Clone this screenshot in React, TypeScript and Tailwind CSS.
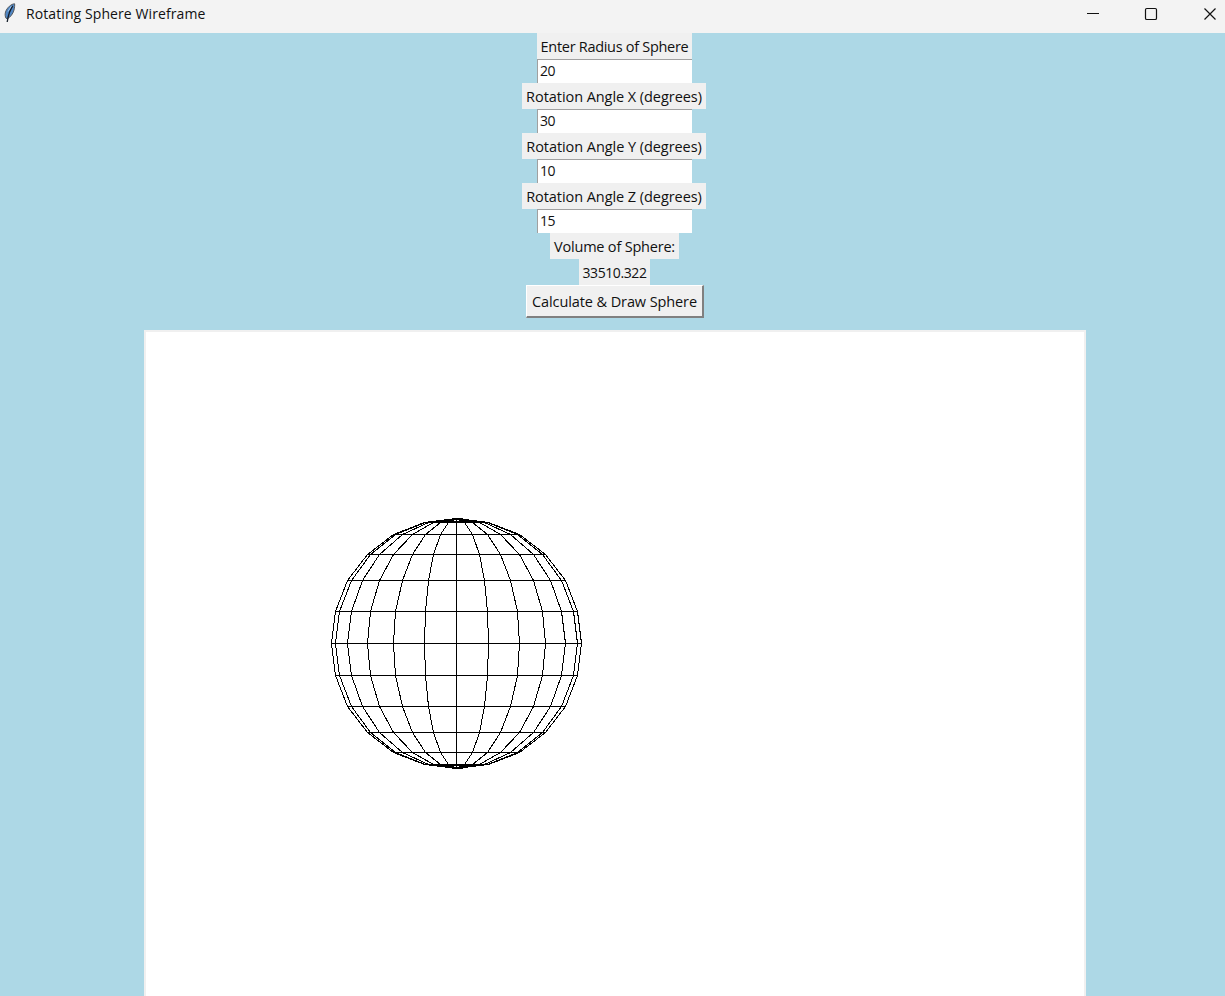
import React from "react";

const RADIUS = 125.4;
const CX = 310.5;
const CY = 311.5;
const STEP = Math.PI / 12;

function point(lat: number, lon: number): string {
  const x = CX + Math.round(RADIUS * Math.cos(lat * STEP) * Math.sin(lon * STEP));
  const y = CY - Math.round(RADIUS * Math.sin(lat * STEP));
  return `${x},${y}`;
}

function Sphere() {
  const lats = Array.from({ length: 13 }, (_, i) => i - 6);
  return (
    <svg width="938" height="800" className="block" fill="none" stroke="#000" strokeWidth="1" shapeRendering="crispEdges">
      {lats.map((lon) => (
        <polyline key={`m${lon}`} points={lats.map((lat) => point(lat, lon)).join(" ")} />
      ))}
      {lats.map((lat) => (
        <polyline key={`p${lat}`} points={`${point(lat, -6)} ${point(lat, 6)}`} />
      ))}
      <path d={`M${CX - 5} ${CY - 125}h11M${CX - 5} ${CY + 125}h11M${CX - 26} ${CY - 122}h52M${CX - 26} ${CY + 122}h52`} />
    </svg>
  );
}

function Feather() {
  return (
    <svg width="12" height="20" viewBox="0 0 12 20" className="ml-1 block">
      <path d="M10.6.8C7.500.8 3 4.500 1.500 9c-.7 2.700-.3 4.700.5 6.200l1.300.6C6 14.500 9 11 10 7c.6-2.500.8-4.800.6-6.200Z" fill="#4f86c4" stroke="#55585c" strokeWidth="1" />
      <path d="M8.800 3C6.500 6 4.500 10 3.200 19" fill="none" stroke="#17202c" strokeWidth="1.300" />
      <path d="M7.300 3.200 4 8.500" stroke="#9cc4ea" strokeWidth="1" />
    </svg>
  );
}

function Label({ text, box, type }: { text: string; box: string; type: string }) {
  return (
    <div className={`flex h-[26px] shrink-0 items-center justify-center whitespace-nowrap bg-[#f0f0f0] ${box}`}>
      <span className={type}>{text}</span>
    </div>
  );
}

function Entry({ value }: { value: string }) {
  return (
    <input
      defaultValue={value}
      className="ml-px block h-6 w-[155px] shrink-0 rounded-none border-t border-l border-[#a0a0a0] bg-white pb-[2px] pl-[2px] text-[14px] tracking-[-0.5px] text-[#111] outline-none"
    />
  );
}

export default function App() {
  return (
    <div className="flex h-[996px] w-[1225px] flex-col overflow-hidden bg-[#add8e6] font-['Open_Sans','Noto_Sans',sans-serif] text-[14.5px] text-[#111]">
      <header className="flex h-[33px] shrink-0 items-start bg-[#f3f3f3] pt-[3px]">
        <Feather />
        <h1 className="ml-[10px] text-[14px] leading-[22px] font-normal tracking-[0.09px] whitespace-nowrap">Rotating Sphere Wireframe</h1>
        <svg width="138" height="22" className="ml-auto block" fill="none" stroke="#111">
          <path d="M0 10.500h12" />
          <rect x="58.500" y="5.500" width="11" height="11" rx="1.300" strokeWidth="1.200" />
          <path d="m117.500 5.500 11 11m0-11-11 11" strokeWidth="1.200" />
        </svg>
      </header>
      <main className="flex flex-1 flex-col items-center overflow-hidden pl-[3px]">
        <Label text="Enter Radius of Sphere" box="ml-px w-[155px]" type="pt-px tracking-[-0.300px]" />
        <Entry value="20" />
        <Label text="Rotation Angle X (degrees)" box="w-[184px]" type="pt-px tracking-[-0.060px]" />
        <Entry value="30" />
        <Label text="Rotation Angle Y (degrees)" box="w-[184px]" type="pt-px tracking-[-0.060px]" />
        <Entry value="10" />
        <Label text="Rotation Angle Z (degrees)" box="w-[184px]" type="pt-px tracking-[-0.060px]" />
        <Entry value="15" />
        <Label text="Volume of Sphere:" box="ml-px w-[129px]" type="pt-px tracking-[-0.200px]" />
        <Label text="33510.322" box="ml-px w-[71px]" type="text-[14px] tracking-[-0.400px]" />
        <button className="ml-[2px] flex h-[33px] w-[178px] shrink-0 items-center justify-center border-t border-r-2 border-b-2 border-l border-t-white border-r-[#808080] border-b-[#808080] border-l-white bg-[#f0f0f0] whitespace-nowrap">
          <span className="pt-px tracking-[-0.100px]">Calculate &amp; Draw Sphere</span>
        </button>
        <section className="mt-[12px] ml-[2px] w-[942px] shrink-0 border-2 border-[#f0f0f0] bg-white">
          <Sphere />
        </section>
      </main>
    </div>
  );
}
